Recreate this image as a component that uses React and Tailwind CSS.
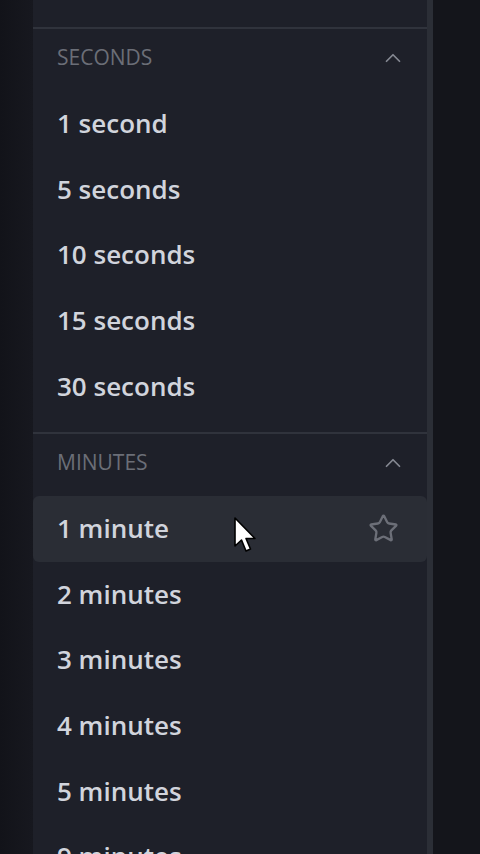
import { ChevronUp, Star } from 'lucide-react';

const sections = [
  {
    title: 'SECONDS',
    items: ['1 second', '5 seconds', '10 seconds', '15 seconds', '30 seconds'],
  },
  {
    title: 'MINUTES',
    items: ['1 minute', '2 minutes', '3 minutes', '4 minutes', '5 minutes', '9 minutes'],
  },
];

// 滑鼠指標
const Cursor = () => (
  <svg
    className="absolute left-[233px] top-[516px]"
    width="26"
    height="40"
    viewBox="0 0 26 40"
  >
    <path
      d="M2 2 L2 30 L8.5 24 L13 35 L17.5 33 L13 22.5 L22 22.5 Z"
      fill="#ffffff"
      stroke="#000000"
      strokeWidth="1.6"
      strokeLinejoin="round"
    />
  </svg>
);

const Row = ({ label, active }) => (
  <div
    className={
      active
        ? 'h-[65.6px] flex items-center justify-between pl-6 pr-7 bg-[#2a2d35] rounded-md'
        : 'h-[65.6px] flex items-center justify-between pl-6 pr-7'
    }
  >
    <span className="text-[26px] text-[#d1d4dc] font-semibold">{label}</span>
    {active && <Star size={31} strokeWidth={1.8} className="text-[#6c6f78]" />}
  </div>
);

const App = () => {
  return (
    <div
      className="relative w-[480px] h-[854px] overflow-hidden bg-[#14151b] flex"
      style={{ fontFamily: '"Open Sans", "Noto Sans", sans-serif' }}
    >
      <div className="w-[33px] shrink-0 bg-gradient-to-r from-[#121319] to-[#17181f]" />
      <div className="w-[394px] shrink-0 bg-[#1e2029] flex flex-col">
        <div className="h-[27px] shrink-0" />
        {sections.map((section) => (
          <div key={section.title} className="border-t-2 border-[#30333c] pb-[13px]">
            <div className="h-[62px] flex items-center justify-between pl-6 pr-[21px] pb-1">
              <span className="text-[21px] text-[#6b6e77] font-medium">{section.title}</span>
              <ChevronUp size={26} strokeWidth={1.6} className="text-[#858892]" />
            </div>
            {section.items.map((item) => (
              <Row key={item} label={item} active={item === '1 minute'} />
            ))}
          </div>
        ))}
      </div>
      <div className="w-[6px] shrink-0 bg-[#2b2e36]" />
      <div className="flex-1 bg-[#14151b]" />
      <Cursor />
    </div>
  );
};

export default App;
